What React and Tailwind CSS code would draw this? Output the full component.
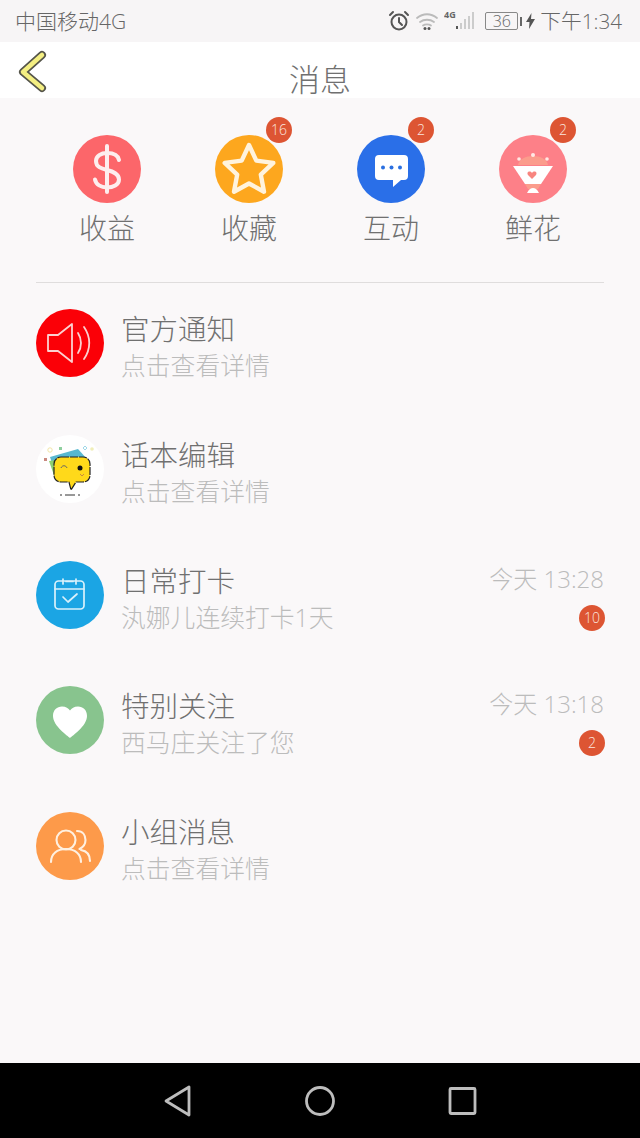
const F = { fontFamily: '"Open Sans","Noto Sans CJK SC",sans-serif' };

function Badge({ n, className = "" }) {
  return (
    <span className={`flex h-[26px] w-[26px] items-center justify-center rounded-full bg-[#dd5533] text-[14px] font-light leading-none text-[#fbe6df] ${className}`}>
      {n}
    </span>
  );
}

function Dollar() {
  return (
    <svg width="68" height="68" viewBox="0 0 68 68" fill="none" stroke="#fdeeee" strokeWidth="4" strokeLinecap="round">
      <path d="M34 11v46" />
      <path d="M46 25c-1-5-6-7-12-7s-11 3-11 8c0 6 5 7.500 11 9 6 1.500 12 3.500 12 9.500 0 5.500-6 8-12 8s-11-3-12-8" />
    </svg>
  );
}
function Star() {
  return (
    <svg width="68" height="68" viewBox="0 0 68 68" fill="none" stroke="#fff3dd" strokeWidth="4.400" strokeLinejoin="round">
      <path d="M34 10l7.300 15.600 17 2.300-12.500 11.800 3.200 17L34 48.500l-15 8.200 3.200-17L9.700 27.900l17-2.300z" />
    </svg>
  );
}
function Chat() {
  return (
    <svg width="68" height="68" viewBox="0 0 68 68">
      <path d="M22 20h25a4 4 0 0 1 4 4v17a4 4 0 0 1-4 4h-3l-8 7v-7H22a4 4 0 0 1-4-4V24a4 4 0 0 1 4-4z" fill="#fff" />
      <circle cx="26" cy="32.500" r="2" fill="#2a6fe0" />
      <circle cx="34.500" cy="32.500" r="2" fill="#2a6fe0" />
      <circle cx="43" cy="32.500" r="2" fill="#2a6fe0" />
    </svg>
  );
}
function Flower() {
  return (
    <svg width="68" height="68" viewBox="0 0 68 68">
      <path d="M19 30c1-6 8-9 15-9s14 3 15 9z" fill="#fb9c8c" />
      <circle cx="34" cy="20" r="2" fill="#ffe9e4" />
      <circle cx="20" cy="24" r="1.800" fill="#ffe9e4" />
      <circle cx="48" cy="24" r="1.800" fill="#ffe9e4" />
      <path d="M14 31h40l-12 18H26z" fill="#fff" />
      <path d="M26 49h16l-3 5H29z" fill="#fb9c8c" />
      <path d="M28 58c2-4 4-5 6-5s4 1 6 5z" fill="#fff" />
      <path d="M33 44l-4-4c-2-3 2-5 4-2 2-3 6-1 4 2z" fill="#f8857f" />
    </svg>
  );
}
function Speaker() {
  return (
    <svg width="68" height="68" viewBox="0 0 68 68" fill="none" stroke="#fbd0d0" strokeWidth="1.800" strokeLinejoin="round" strokeLinecap="round">
      <path d="M12 26h10l14-11v38L22 42H12z" />
      <path d="M42 24c4 6 4 14 0 20" />
      <path d="M48 18c7 10 7 22 0 32" />
    </svg>
  );
}
function Mascot() {
  return (
    <svg width="68" height="68" viewBox="0 0 68 68">
      <circle cx="14" cy="15" r="2.200" fill="none" stroke="#f2e6a8" />
      <rect x="23" y="12" width="3" height="3" fill="#8fcf9f" />
      <rect x="8" y="23" width="3" height="3" fill="#c98a80" />
      <path d="M49 11l2 2-2 2-2-2z" fill="none" stroke="#9fd8e8" />
      <circle cx="56" cy="14" r="1.800" fill="#f0eeb8" />
      <path d="M14 22l28-8 9 10-1 20-28 2z" fill="#58b8d0" />
      <path d="M13 26l20-3 6 20-19 3z" fill="#8fd070" />
      <path d="M25 22h22c4 0 7 3 7 7v11c0 4-3 7-7 7h-7l-5 8-2-8h-8c-4 0-7-3-7-7V29c0-4 3-7 7-7z" fill="#ffd91a" stroke="#222" strokeWidth="1.200" strokeDasharray="8 1" />
      <path d="M25 33c1-3 5-3 6 0" fill="none" stroke="#666" strokeWidth="1" />
      <circle cx="44" cy="33" r="2.500" fill="#111" />
      <path d="M44 39l2 2 2-2" fill="none" stroke="#c98a40" strokeWidth="1" />
      <path d="M24 60h2M29 60h10M42 60h2" stroke="#333" strokeWidth="1" />
    </svg>
  );
}
function Calendar() {
  return (
    <svg width="68" height="68" viewBox="0 0 68 68" fill="none" stroke="#d9f1fb" strokeWidth="1.700" strokeLinecap="round" strokeLinejoin="round">
      <rect x="19" y="20" width="29" height="28" rx="3.500" />
      <path d="M19 28h29" />
      <path d="M27 18v5M40 18v5M30 20.500h7" />
      <path d="M27 36l5 5 9-8" />
    </svg>
  );
}
function Heart() {
  return (
    <svg width="68" height="68" viewBox="0 0 68 68">
      <path d="M34 52c-2-2-17-12-17-22 0-6 4-9.500 9-9.500 4 0 6.500 2 8 4 1.500-2 4-4 8-4 5 0 9 3.500 9 9.500 0 10-15 20-17 22z" fill="#fff" />
    </svg>
  );
}
function Group() {
  return (
    <svg width="68" height="68" viewBox="0 0 68 68" fill="none" stroke="#fff0e0" strokeWidth="2.100" strokeLinecap="round">
      <circle cx="30" cy="28" r="9.500" />
      <path d="M15 50c0-8 6-13 15-13s15 5 15 13" />
      <path d="M41 19c6 0 8.500 4.500 8.500 9s-3 7.500-6 9" />
      <path d="M45 38c6 1 9 5 9 11" />
    </svg>
  );
}

const tops = [
  { label: "收益", bg: "bg-[#fc666a]", icon: <Dollar /> },
  { label: "收藏", bg: "bg-[#fda71e]", icon: <Star />, n: 16 },
  { label: "互动", bg: "bg-[#2a6fe8]", icon: <Chat />, n: 2 },
  { label: "鲜花", bg: "bg-[#fd8088]", icon: <Flower />, n: 2 },
];

const rows = [
  { title: "官方通知", sub: "点击查看详情", bg: "bg-[#fb0007]", icon: <Speaker /> },
  { title: "话本编辑", sub: "点击查看详情", bg: "bg-white", icon: <Mascot /> },
  { title: "日常打卡", sub: "汍娜儿连续打卡1天", bg: "bg-[#1ba5e4]", icon: <Calendar />, time: "今天 13:28", n: 10 },
  { title: "特别关注", sub: "西马庄关注了您", bg: "bg-[#88c48e]", icon: <Heart />, time: "今天 13:18", n: 2 },
  { title: "小组消息", sub: "点击查看详情", bg: "bg-[#fd9a4a]", icon: <Group /> },
];

export default function App() {
  return (
    <div style={F} className="flex h-[1138px] w-[640px] flex-col overflow-hidden bg-[#faf8f9] font-light">
      <div className="flex h-[42px] items-center justify-between bg-[#f7f5f6] pl-[15px] pr-[18px] text-[#666]">
        <span className="text-[21px] leading-none">中国移动4G</span>
        <div className="flex items-center">
          <svg width="22" height="22" viewBox="0 0 22 22" fill="none" stroke="#555" strokeWidth="2" strokeLinecap="round">
            <circle cx="11" cy="12" r="7.500" />
            <path d="M11 8v4l3 3M2 5l3-3M20 5l-3-3" />
          </svg>
          <svg className="ml-[5px]" width="24" height="20" viewBox="0 0 24 20" fill="none" stroke="#bbb" strokeWidth="1.800" strokeLinecap="round">
            <path d="M2 7c6-5 14-5 20 0M5 11c4-3 10-3 14 0M8 14.500c2-1.500 6-1.500 8 0" />
            <circle cx="10" cy="17.500" r="1.500" fill="#555" stroke="none" />
            <circle cx="14" cy="17.500" r="1.500" fill="#555" stroke="none" />
          </svg>
          <svg className="ml-[5px]" width="32" height="24" viewBox="0 0 32 24">
            <text x="0" y="9" fontSize="9" fontWeight="700" fill="#666">4G</text>
            <rect x="12" y="17" width="2" height="3" fill="#555" />
            <rect x="16" y="14" width="2" height="6" fill="#ccc" />
            <rect x="20" y="10" width="2" height="10" fill="#ccc" />
            <rect x="24" y="7" width="2" height="13" fill="#ccc" />
            <rect x="28" y="3" width="2" height="17" fill="#ccc" />
          </svg>
          <span className="ml-[9px] flex h-[18px] w-[33px] items-center justify-center rounded-[2px] border border-[#888] text-[16px] leading-none">36</span>
          <span className="ml-[2px] h-[9px] w-[2px] bg-[#666]" />
          <svg className="ml-[4px]" width="9" height="16" viewBox="0 0 9 16">
            <path d="M5.500 0L0 9h3.500L3 16l6-10H5z" fill="#555" />
          </svg>
          <span className="ml-[5px] text-[20.700px] leading-none">下午1:34</span>
        </div>
      </div>

      <header className="relative flex h-[56px] items-center justify-center bg-white">
        <svg className="absolute left-[18px] top-[8px]" width="30" height="44" viewBox="0 0 30 44" fill="none" strokeLinecap="round" strokeLinejoin="round">
          <path d="M24 5L5 22 24 38" stroke="#55554a" strokeWidth="8" />
          <path d="M24 5L5 22 24 38" stroke="#f4ef82" strokeWidth="4.500" />
        </svg>
        <span className="pt-[18px] text-[31px] leading-none text-[#707070]">消息</span>
      </header>

      <main className="flex-1">
        <div className="mx-[36px] flex h-[185px] items-start justify-between border-b border-[#dfdddd] px-[37px] pt-[37px]">
          {tops.map((t) => (
            <div key={t.label} className="flex w-[68px] flex-col items-center">
              <div className={`relative h-[68px] w-[68px] rounded-full ${t.bg}`}>
                {t.icon}
                {t.n ? <Badge n={t.n} className="absolute -top-[18px] left-[51px]" /> : null}
              </div>
              <span className="mt-[10px] whitespace-nowrap text-[28px] leading-[30px] text-[#707070]">{t.label}</span>
            </div>
          ))}
        </div>

        <div className="pt-[26px]">
          {rows.map((r) => (
            <div key={r.title} className="flex h-[125.750px] items-start pl-[36px] pr-[35px]">
              <div className={`h-[68px] w-[68px] shrink-0 rounded-full ${r.bg}`}>{r.icon}</div>
              <div className="ml-[18px] min-w-0 flex-1 pt-[2px]">
                <div className="flex items-center justify-between">
                  <span className="-ml-[1px] text-[28.500px] leading-[36px] text-[#707070]">{r.title}</span>
                  {r.time ? <span className="mb-[4px] mr-[1px] text-[24px] leading-[30px] text-[#bcbcbc]">{r.time}</span> : null}
                </div>
                <div className="flex items-center justify-between">
                  <span className="-ml-[1px] text-[24.800px] leading-[36px] text-[#bcbcbc]">{r.sub}</span>
                  {r.n ? <Badge n={r.n} className="relative top-[1px]" /> : null}
                </div>
              </div>
            </div>
          ))}
        </div>
      </main>

      <nav className="flex h-[75px] items-center bg-black">
        <div className="flex w-full justify-center gap-[100px]">
          <svg width="44" height="36" viewBox="0 0 44 36" fill="none" stroke="#bdbdbd" strokeWidth="2.800" strokeLinejoin="round">
            <path d="M12 18L35 4v28z" />
          </svg>
          <svg width="44" height="36" viewBox="0 0 44 36" fill="none" stroke="#bdbdbd" strokeWidth="2.800">
            <circle cx="22" cy="18" r="13.500" />
          </svg>
          <svg width="44" height="36" viewBox="0 0 44 36" fill="none" stroke="#bdbdbd" strokeWidth="2.800" strokeLinejoin="round">
            <rect x="8" y="5.500" width="25" height="25" rx="1" />
          </svg>
        </div>
      </nav>
    </div>
  );
}
